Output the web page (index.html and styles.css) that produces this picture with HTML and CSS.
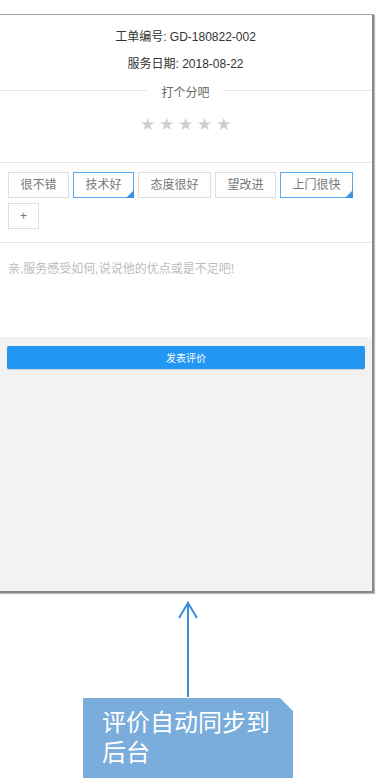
FILE: index.html
```html
<!DOCTYPE html>
<html lang="zh-CN">
<head>
    <meta charset="UTF-8">
    <meta name="viewport" content="width=device-width, initial-scale=1.0">
    <title>评价</title>
    <link rel="stylesheet" href="styles.css">
</head>
<body>
    <!-- Phone Frame -->
    <div class="phone">
        <div class="order-info">
            <div class="info-line">工单编号: GD-180822-002</div>
            <div class="info-line">服务日期: 2018-08-22</div>
        </div>

        <!-- Rating -->
        <div class="rate-title"><span>打个分吧</span></div>
        <div class="stars">
            <span>★</span><span>★</span><span>★</span><span>★</span><span>★</span>
        </div>

        <!-- Tags -->
        <div class="tags">
            <span class="tag">很不错</span>
            <span class="tag active">技术好</span>
            <span class="tag">态度很好</span>
            <span class="tag">望改进</span>
            <span class="tag active">上门很快</span>
            <span class="tag add">+</span>
        </div>

        <div class="comment">亲,服务感受如何,说说他的优点或是不足吧!</div>

        <div class="footer">
            <button class="submit-button">发表评价</button>
        </div>
    </div>

    <!-- Annotation -->
    <div class="note-area">
        <svg class="arrow" width="22" height="98" viewBox="0 0 22 98">
            <path d="M11 2 L11 97" stroke="#3a8fd6" stroke-width="2" fill="none"/>
            <path d="M2 18 L11 3 L20 18" stroke="#3a8fd6" stroke-width="2" fill="none"/>
        </svg>
        <div class="note">评价自动同步到后台</div>
    </div>
</body>
</html>
```

FILE: styles.css
```css
* {
    margin: 0;
    padding: 0;
    box-sizing: border-box;
}

body {
    background-color: #fff;
    font-family: "Liberation Sans", "Noto Sans CJK SC", sans-serif;
    overflow: hidden;
}

/* Phone Frame */
.phone {
    margin: 14px 0 0 -2px;
    width: 376px;
    height: 579px;
    border: 1px solid #a8a8a8;
    border-right: 2px solid #888;
    border-bottom: 2px solid #888;
    box-shadow: 1px 1px 1px rgba(0, 0, 0, 0.25);
    background-color: #f2f2f2;
    display: flex;
    flex-direction: column;
}

.order-info {
    background-color: #fff;
    padding-top: 9px;
    text-align: center;
}

.info-line {
    font-size: 12px;
    line-height: 27px;
    color: #333;
}

/* Rating */
.rate-title {
    background-color: #fff;
    position: relative;
    height: 23px;
    padding-top: 5px;
    text-align: center;
}

.rate-title::before {
    content: "";
    position: absolute;
    left: 0;
    right: 0;
    top: 12px;
    border-top: 1px solid #e6e6e6;
}

.rate-title span {
    position: relative;
    background-color: #fff;
    padding: 0 14px;
    font-size: 12px;
    line-height: 16px;
    color: #666;
}

.stars {
    background-color: #fff;
    display: flex;
    justify-content: center;
    padding: 13px 0 28px;
    border-bottom: 1px solid #e6e6e6;
}

.stars span {
    width: 19px;
    text-align: center;
    font-family: "DejaVu Sans", sans-serif;
    font-size: 17px;
    line-height: 20px;
    color: #cfcfcf;
}

/* Tags */
.tags {
    background-color: #fff;
    display: flex;
    flex-wrap: wrap;
    gap: 5px 4px;
    padding: 9px 6px 13px 9px;
    border-bottom: 1px solid #e6e6e6;
}

.tag {
    position: relative;
    height: 26px;
    padding: 0 11.5px;
    border: 1px solid #ddd;
    font-size: 12px;
    line-height: 24px;
    color: #777;
}

.tag.active {
    border-color: #5aa9f0;
}

.tag.active::after {
    content: "";
    position: absolute;
    right: -1px;
    bottom: -1px;
    border-left: 8px solid transparent;
    border-bottom: 8px solid #3a92e6;
}

.tag.add {
    width: 31px;
    padding: 0;
    text-align: center;
}

.comment {
    background-color: #fff;
    height: 94px;
    padding: 16px 9px;
    font-size: 12px;
    color: #bbb;
}

.footer {
    flex: 1;
    padding: 9px 7px 0 8px;
}

.submit-button {
    width: 100%;
    height: 23px;
    border: none;
    border-radius: 2px;
    background-color: #2196f3;
    box-shadow: 0 1px 1px rgba(0, 0, 0, 0.15);
    color: #fff;
    font-family: "Noto Sans CJK SC", sans-serif;
    font-size: 10px;
}

/* Annotation */
.note-area {
    display: flex;
    flex-direction: column;
    align-items: flex-start;
    padding-top: 7px;
}

.arrow {
    display: block;
    margin-left: 177px;
}

.note {
    margin-left: 83px;
    width: 210px;
    height: 80px;
    padding: 8px 20px 0 19px;
    background-color: #7aaddb;
    clip-path: polygon(0 0, 197px 0, 210px 13px, 210px 100%, 0 100%);
    color: #fff;
    font-family: "Noto Sans CJK SC", sans-serif;
    font-size: 24px;
    line-height: 30px;
}
```
